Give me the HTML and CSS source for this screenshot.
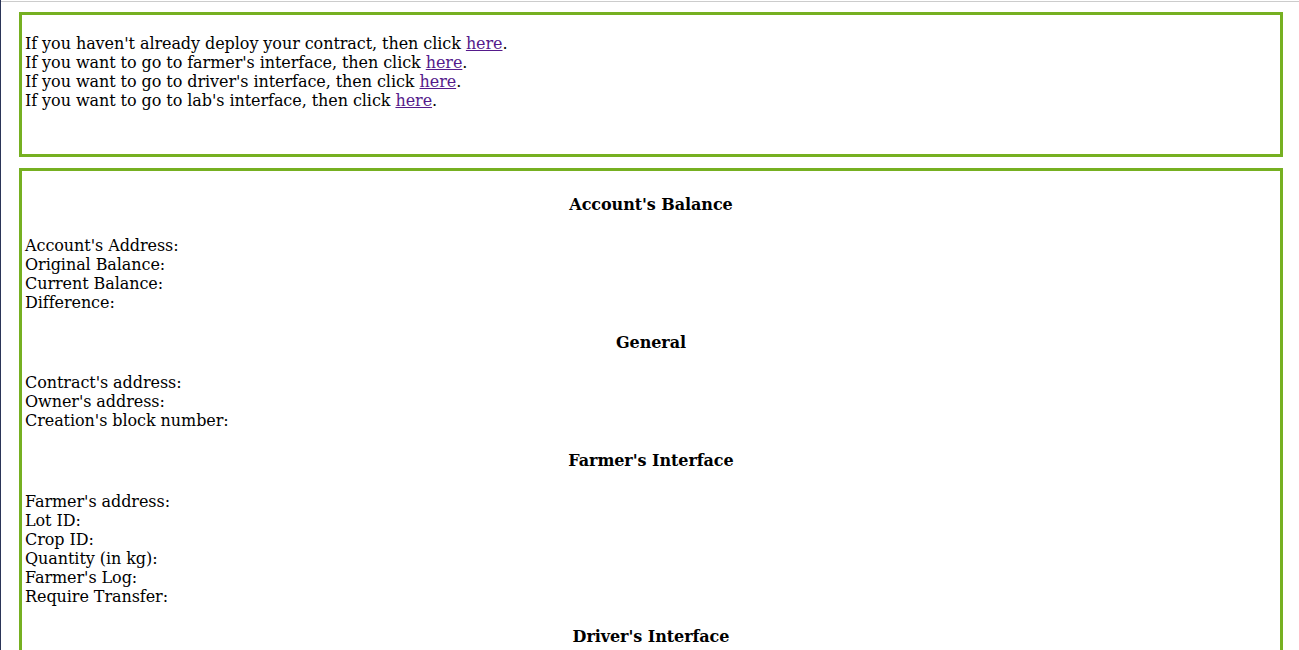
FILE: index.html
```html
<!DOCTYPE html>
<html>
<head>
<meta charset="utf-8">
<title>Contract</title>
<link rel="stylesheet" href="styles.css">
</head>
<body>
<div class="topline"></div>
<div class="page">
  <div class="box box-links">
    <p class="links">
      If you haven't already deploy your contract, then click <a href="#">here</a>.<br>
      If you want to go to farmer's interface, then click <a href="#">here</a>.<br>
      If you want to go to driver's interface, then click <a href="#">here</a>.<br>
      If you want to go to lab's interface, then click <a href="#">here</a>.
    </p>
  </div>
  <div class="box box-info">
    <h4 class="title">Account's Balance</h4>
    <div class="lines">
      Account's Address:<br>
      Original Balance:<br>
      Current Balance:<br>
      Difference:
    </div>
    <h4 class="title">General</h4>
    <div class="lines">
      Contract's address:<br>
      Owner's address:<br>
      Creation's block number:
    </div>
    <h4 class="title">Farmer's Interface</h4>
    <div class="lines">
      Farmer's address:<br>
      Lot ID:<br>
      Crop ID:<br>
      Quantity (in kg):<br>
      Farmer's Log:<br>
      Require Transfer:
    </div>
    <h4 class="title">Driver's Interface</h4>
    <div class="lines">
      Driver's address:<br>
      Driver's Log:<br>
      Transfer Completed:
    </div>
    <h4 class="title">Lab's Interface</h4>
    <div class="lines">
      Lab's address:<br>
      Lab's Log:<br>
      Quality:
    </div>
  </div>
</div>
</body>
</html>
```

FILE: styles.css
```css
html {
  background: #ffffff;
}
body {
  margin: 0;
  border-left: 1px solid #2b3558;
  min-height: 650px;
  font-family: "DejaVu Serif", serif;
  font-size: 16px;
  letter-spacing: -0.07px;
  color: #000000;
}
.topline {
  margin-top: 1px;
  height: 1px;
  background: #cccccc;
}
.page {
  padding: 10px 16px 10px 18px;
  display: flex;
  flex-direction: column;
  gap: 11px;
}
.box {
  border: 3px solid #76b021;
  padding: 3px;
}
.box-links {
  padding-bottom: 28px;
}
.links {
  margin: 16px 0;
}
a {
  color: #551a8b;
  text-decoration: underline;
}
.title {
  font-size: 16px;
  font-weight: bold;
  text-align: center;
  margin: 21.28px 0;
}
.lines {
  margin: 0;
}
```
